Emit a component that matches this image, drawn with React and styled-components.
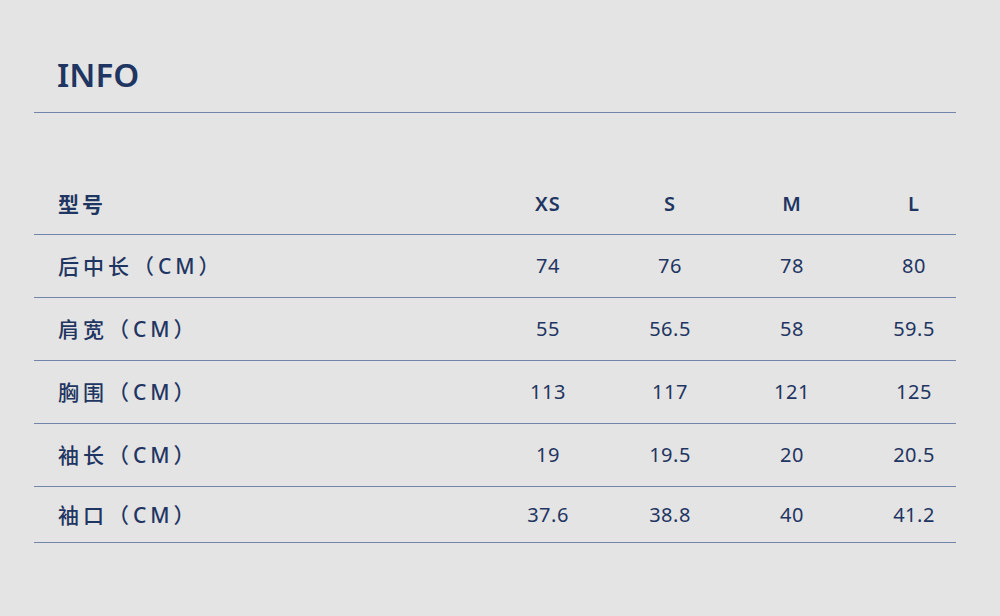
import React from "react";
import styled, { createGlobalStyle } from "styled-components";

const Global = createGlobalStyle`
  html, body { margin: 0; padding: 0; background: #e4e4e4; }
  body { font-family: "Noto Sans", "Noto Sans CJK SC", sans-serif; color: #1f3562; }
`;

const Page = styled.div`
  width: 922px;
  height: 616px;
  padding: 0 44px 0 34px;
  box-sizing: content-box;
  background: #e4e4e4;
`;

const Header = styled.header`
  padding: 58px 0 20px 23px;
  border-bottom: 1px solid #7384aa;
`;

const Title = styled.h1`
  margin: 0;
  font-family: "Noto Sans", sans-serif;
  font-size: 33px;
  line-height: 34px;
  font-weight: 600;
  letter-spacing: 0px;
  color: #1f3562;
`;

const Table = styled.div`
  display: flex;
  flex-direction: column;
`;

const Row = styled.div`
  display: grid;
  grid-template-columns: 1fr repeat(4, 76px);
  column-gap: 46px;
  padding: 0 4px 0 24px;
  height: ${(p) => p.$h}px;
  align-items: ${(p) => (p.$head ? "end" : "center")};
  padding-bottom: ${(p) => (p.$head ? 18 : 0)}px;
  border-bottom: 1px solid #7384aa;
  box-sizing: border-box;
`;

const Label = styled.div`
  font-family: "Noto Sans", "Noto Sans CJK SC", sans-serif;
  font-size: 21px;
  line-height: 24px;
  letter-spacing: ${(p) => (p.$head ? "3px" : "4px")};
  font-weight: ${(p) => (p.$head ? 600 : 500)};
  white-space: nowrap;
`;

const Cell = styled.div`
  text-align: center;
  font-family: "Noto Sans", sans-serif;
  font-size: 20px;
  line-height: 24px;
  font-weight: ${(p) => (p.$head ? 600 : 400)};
  letter-spacing: ${(p) => (p.$head ? "1px" : "0.5px")};
`;

const sizes = ["XS", "S", "M", "L"];
const rows = [
  ["后中长（CM）", ["74", "76", "78", "80"]],
  ["肩宽（CM）", ["55", "56.5", "58", "59.5"]],
  ["胸围（CM）", ["113", "117", "121", "125"]],
  ["袖长（CM）", ["19", "19.5", "20", "20.5"]],
  ["袖口（CM）", ["37.6", "38.8", "40", "41.2"]],
];

export default function App() {
  return (
    <>
      <Global />
      <Page>
        <Header>
          <Title>INFO</Title>
        </Header>
        <Table>
          <Row $head $h={122}>
            <Label $head>型号</Label>
            {sizes.map((s) => (
              <Cell $head key={s}>{s}</Cell>
            ))}
          </Row>
          {rows.map(([label, vals], i) => (
            <Row key={label} $h={i === rows.length - 1 ? 56 : 63}>
              <Label>{label}</Label>
              {vals.map((v, j) => (
                <Cell key={j}>{v}</Cell>
              ))}
            </Row>
          ))}
        </Table>
      </Page>
    </>
  );
}
